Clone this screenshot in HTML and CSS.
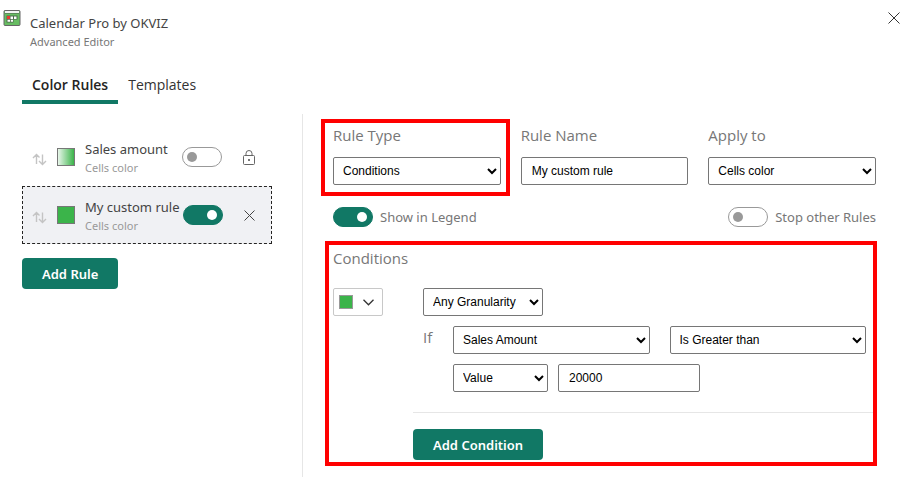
FILE: index.html
```html
<!DOCTYPE html>
<html lang="en">
<head>
<meta charset="utf-8">
<title>Calendar Pro by OKVIZ</title>
<link rel="stylesheet" href="styles.css">
</head>
<body>
<header class="header">
  <svg class="logo" width="18" height="17" viewBox="0 0 18 17" aria-hidden="true">
    <rect x="1" y="1.500" width="16" height="15" rx="1" fill="#67bd62" stroke="#666"/>
    <path d="M2 2h14v2.500H2z" fill="#f4f4f4"/>
    <path d="M2 4.500h14" stroke="#5b8b5a"/>
    <path d="M3.500 6.500h11v4h-4v3h-7z" fill="#4d6b4c"/>
    <path d="M7.500 7.500h2.500v2.500H7.500zM11 7.500h2.500v2.500H11zM4.500 10.800H7v2H4.500zM7.800 10.800H10v2H7.800z" fill="#fff"/>
    <path d="M4 7h3v3H4z" fill="#e83a30"/>
  </svg>
  <div class="heading">
    <h1 class="title">Calendar Pro by OKVIZ</h1>
    <p class="subtitle">Advanced Editor</p>
  </div>
  <button class="icon-button" type="button" aria-label="Close">
    <svg width="12" height="12" viewBox="0 0 12 12"><path d="M0.500 0.500l11 11M11.500 0.500l-11 11" stroke="#333" fill="none"/></svg>
  </button>
</header>

<nav class="tabs">
  <a class="tab tab-active" href="#rules">Color Rules</a>
  <a class="tab" href="#templates">Templates</a>
</nav>

<main class="editor">
  <section class="sidebar">
    <ul class="rules">
      <li class="rule">
        <svg class="sort" width="15" height="13" viewBox="0 0 15 13" aria-hidden="true"><path d="M4.500 11V1.500M1 5l3.500-3.500L7.500 4.500M10.500 1.500V11.500M7 8l3.500 3.500L14 8"/></svg>
        <span class="swatch swatch-gradient"></span>
        <label class="rule-text" for="rule-sales"><span class="rule-name">Sales amount</span><span class="rule-target">Cells color</span></label>
        <input class="toggle" id="rule-sales" type="checkbox">
        <button class="icon-button rule-action" type="button" aria-label="Lock">
          <svg width="12" height="15" viewBox="0 0 12 15"><g fill="none" stroke="#666"><rect x=".5" y="5.500" width="11" height="9" rx="1"/><path d="M3 5.500V3.500a3 3 0 0 1 6 0v2"/></g><path d="M5 9h2v2H5z" fill="#777"/></svg>
        </button>
      </li>
      <li class="rule rule-selected">
        <svg class="sort" width="15" height="13" viewBox="0 0 15 13" aria-hidden="true"><path d="M4.500 11V1.500M1 5l3.500-3.500L7.500 4.500M10.500 1.500V11.500M7 8l3.500 3.500L14 8"/></svg>
        <span class="swatch"></span>
        <label class="rule-text" for="rule-custom"><span class="rule-name">My custom rule</span><span class="rule-target">Cells color</span></label>
        <input class="toggle" id="rule-custom" type="checkbox" checked>
        <button class="icon-button rule-action" type="button" aria-label="Delete">
          <svg width="11" height="11" viewBox="0 0 11 11"><path d="M.5.5l10 10M10.500.5l-10 10" stroke="#444" fill="none"/></svg>
        </button>
      </li>
    </ul>
    <button class="button" type="button">Add Rule</button>
  </section>

  <section class="details">
    <div class="fields">
      <div class="field field-marked">
        <label class="label" for="type">Rule Type</label>
        <select class="control" id="type"><option>Conditions</option></select>
      </div>
      <div class="field">
        <label class="label" for="name">Rule Name</label>
        <input class="control" id="name" type="text" value="My custom rule">
      </div>
      <div class="field">
        <label class="label" for="apply">Apply to</label>
        <select class="control" id="apply"><option>Cells color</option></select>
      </div>
    </div>

    <div class="switches">
      <label class="switch"><input class="toggle" type="checkbox" checked>Show in Legend</label>
      <label class="switch"><input class="toggle" type="checkbox">Stop other Rules</label>
    </div>

    <section class="conditions">
      <h2 class="label">Conditions</h2>
      <div class="condition">
        <button class="color-button" type="button" aria-label="Color">
          <span class="swatch swatch-small"></span>
          <svg width="11" height="7" viewBox="0 0 11 7"><path d="M.5.8l5 5 5-5" fill="none" stroke="#333" stroke-width="1.300"/></svg>
        </button>
        <div class="condition-rows">
          <select class="control granularity" aria-label="Granularity"><option>Any Granularity</option></select>
          <div class="condition-if">
            <label class="label" for="measure">If</label>
            <div class="criteria">
              <div class="operands">
                <select class="control" id="measure"><option>Sales Amount</option></select>
                <select class="control" aria-label="Operator"><option>Is Greater than</option></select>
              </div>
              <div class="values">
                <select class="control value-kind" aria-label="Value kind"><option>Value</option></select>
                <input class="control value-input" type="text" value="20000" aria-label="Value">
              </div>
            </div>
          </div>
        </div>
      </div>
      <div class="condition-footer">
        <button class="button" type="button">Add Condition</button>
      </div>
    </section>
  </section>
</main>
</body>
</html>
```
FILE: styles.css
```css
* { box-sizing: border-box; }

body {
  margin: 0;
  background: #fff;
  color: #444;
  font: 13px/20px "Noto Sans", "Open Sans", sans-serif;
}

h1, h2, p, ul { margin: 0; padding: 0; font-weight: 400; }
ul { list-style: none; }

.header {
  display: flex;
  align-items: flex-start;
  gap: 9px;
  padding: 9px 9px 0 3px;
}
.heading { flex: 1; padding-top: 4px; }
.title { font-size: 13px; line-height: 20px; }
.subtitle { font-size: 11px; line-height: 18px; color: #777; }

.icon-button {
  display: flex;
  align-items: center;
  justify-content: center;
  padding: 0;
  border: 0;
  background: none;
}
.header .icon-button { padding: 3px 0; }

.tabs { display: flex; padding: 23px 22px 0; }
.tab {
  padding: 0 10px 4px;
  border-bottom: 4px solid transparent;
  color: #333;
  font-family: "Open Sans", "Noto Sans", sans-serif;
  font-size: 14px;
  line-height: 22px;
  text-decoration: none;
}
.tab-active { border-color: #117865; color: #252423; font-weight: 600; }

.editor {
  display: grid;
  grid-template-columns: 250px 1fr;
  gap: 30px;
  min-height: 363px;
  margin: 10px 33px 0 22px;
}

.sidebar { padding-top: 14px; }
.rules { margin-bottom: 14px; }
.rule {
  display: flex;
  align-items: center;
  height: 58px;
  padding: 0 10px 0 9px;
  border: 1px dashed transparent;
}
.rule-selected { border-color: #252423; background: #f0f1f4; }
.sort { margin: 4px 10px 0 0; fill: none; stroke: #c4c4c4; stroke-width: 1.400; }
.swatch {
  width: 18px;
  height: 18px;
  border: 1px solid #777;
  background: #3bb44a;
}
.swatch-gradient { background: linear-gradient(90deg, #e8f6ea, #3bb44a); }
.swatch-small { width: 14px; height: 14px; border-color: #999; }
.rule-text { display: flex; flex-direction: column; min-width: 93px; margin: 0 4px 0 10px; padding-top: 2px; white-space: nowrap; }
.rule-name { font-size: 13px; line-height: 20px; color: #444; }
.rule-target { font-size: 11px; line-height: 18px; color: #999; }
.rule-action { width: 24px; height: 24px; margin-left: auto; }

.toggle {
  appearance: none;
  display: flex;
  align-items: center;
  flex: none;
  width: 40px;
  height: 20px;
  margin: 0;
  padding: 0 4px;
  border: 1px solid #999;
  border-radius: 10px;
  background: #fff;
}
.toggle::before { content: ""; width: 10px; height: 10px; border-radius: 50%; background: #999; }
.toggle:checked { justify-content: flex-end; padding: 0 5px; border-color: #117865; background: #117865; }
.toggle:checked::before { background: #fff; }

.button {
  height: 31px;
  padding: 0 20px;
  border: 0;
  border-radius: 4px;
  background: #117865;
  color: #fff;
  font: 600 13px/20px "Noto Sans", "Open Sans", sans-serif;
}

.details { padding: 10px 0 0 30px; border-left: 1px solid #e6e6e6; }
.fields { display: grid; grid-template-columns: repeat(3, 1fr); gap: 20px; }
.field { position: relative; display: flex; flex-direction: column; gap: 10px; }
.label { color: #777; font-family: "Open Sans", "Noto Sans", sans-serif; font-size: 15px; line-height: 23px; }
.field-marked::after,
.conditions::after {
  content: "";
  position: absolute;
  border: 4px solid #f00;
  pointer-events: none;
}
.field-marked::after { inset: -5px -9px -11px -12px; }

.control {
  width: 100%;
  min-width: 0;
  height: 28px;
  margin: 0;
  padding: 0 5px;
  border: 1px solid #767676;
  border-radius: 2px;
  background: #fff;
  color: #000;
  font: 12px/16px "Liberation Sans", sans-serif;
}
input.control { padding: 0 10px; }

.switches { display: flex; justify-content: space-between; margin-top: 22px; }
.switch { display: flex; align-items: center; gap: 7px; color: #777; font-size: 13px; line-height: 20px; }

.conditions { position: relative; margin-top: 20px; }
.conditions::after { inset: -6px -1px -6px -8px; }
.condition { display: flex; gap: 40px; margin: 18px 10px 20px 0; }
.color-button {
  display: flex;
  align-items: center;
  gap: 10px;
  width: 50px;
  height: 28px;
  padding: 0 5px;
  border: 1px solid #c8c8c8;
  border-radius: 2px;
  background: #fff;
}
.condition-rows { display: flex; flex: 1; flex-direction: column; gap: 10px; }
.condition .granularity { width: 120px; }
.condition-if { display: grid; grid-template-columns: 30px 1fr; }
.criteria { display: flex; flex-direction: column; gap: 10px; }
.operands { display: grid; grid-template-columns: 1fr 1fr; gap: 20px; }
.values { display: flex; gap: 10px; }
.value-kind { width: 95px; }
.value-input { width: 142px; }
.condition-footer { margin-left: 80px; padding-top: 16px; border-top: 1px solid #e6e6e6; }
```
